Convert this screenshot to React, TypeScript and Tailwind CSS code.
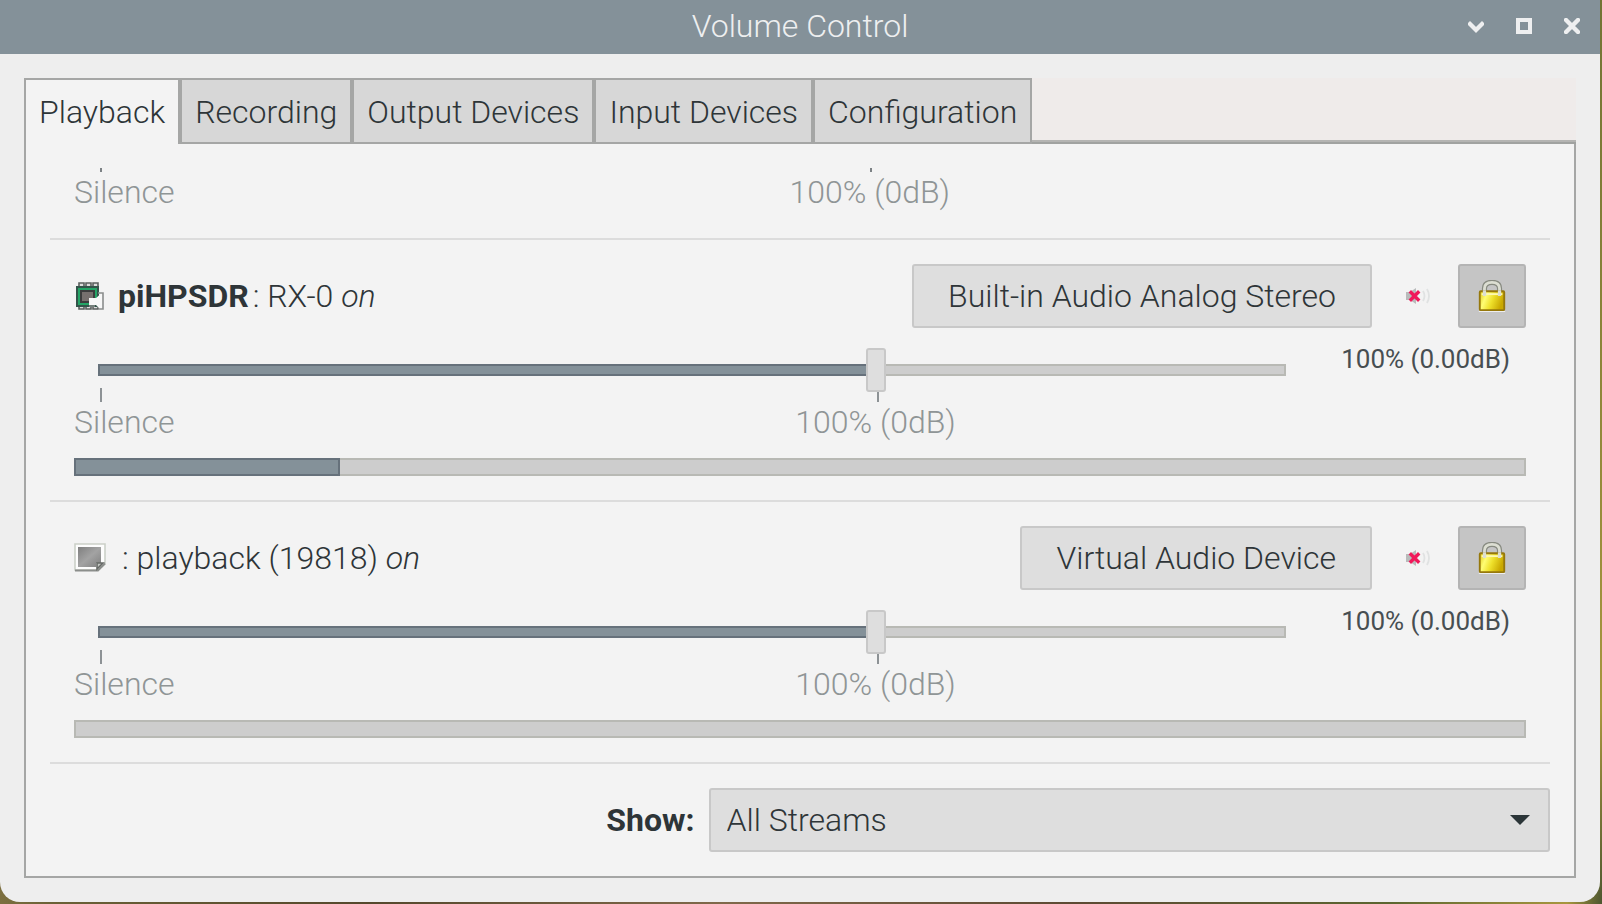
import { useState } from "react";

const TABS = ["Playback", "Recording", "Output Devices", "Input Devices", "Configuration"];

function ChipIcon() {
  return (
    <svg viewBox="0 0 32 32" className="size-8 shrink-0" aria-hidden="true">
      <path
        d="M5 6V3h5v3M12 6V3h5v3M19 6V3h5v3M5 26v3h5v-3M12 26v3h5v-3M19 26v3h5v-3"
        fill="#dcdcdc"
        stroke="#5b5f5e"
        strokeWidth="1.6"
      />
      <rect x="3" y="7" width="21" height="19" fill="#25a566" stroke="#33544a" strokeWidth="2" />
      <rect x="7" y="11" width="13" height="11" fill="#77706e" stroke="#3c3d3d" strokeWidth="2" />
      <path d="M15 18h7l7-6v17h-3l-4-4h-7z" fill="#f7f7f7" />
      <path d="M24 13h5v16h-4M15 26h6" fill="none" stroke="#8a8d8c" strokeWidth="1.6" />
    </svg>
  );
}

function NoteIcon() {
  return (
    <svg viewBox="0 0 32 32" className="size-8 shrink-0" aria-hidden="true">
      <defs>
        <linearGradient id="note" x1="0" y1="0" x2="1" y2="1">
          <stop offset="0" stopColor="#7f7f7f" />
          <stop offset="0.5" stopColor="#a3a3a3" />
          <stop offset="1" stopColor="#808080" />
        </linearGradient>
      </defs>
      <path d="M1 2h30v20l-7 6H1z" fill="#fdfdfd" stroke="#cbd0c8" strokeWidth="1.6" />
      <path d="M1 28.500h23l7-7" fill="none" stroke="#8b8e8b" strokeWidth="1.8" />
      <path d="M4 5h23v16h-5v4H4z" fill="url(#note)" />
      <path d="M23 27v-6h6z" fill="#c4c7c4" stroke="#666966" strokeWidth="1.6" />
    </svg>
  );
}

function MuteIcon() {
  return (
    <svg viewBox="0 0 32 20" className="h-5 w-8" aria-hidden="true">
      <path d="M7 6h4l6-4v16l-6-4H7z" fill="#b9bbbb" />
      <path d="M24 5q3 5 0 10M28 3q4 7 0 14" fill="none" stroke="#e0e2e2" strokeWidth="1.8" />
      <path d="M12 6.500l7 7M19 6.500l-7 7" stroke="#f0195a" strokeWidth="3.4" strokeLinecap="square" />
    </svg>
  );
}

function LockIcon() {
  return (
    <svg viewBox="0 0 32 34" className="h-8 w-8" aria-hidden="true">
      <defs>
        <linearGradient id="brass" x1="0" y1="0" x2="1" y2="0.3">
          <stop offset="0" stopColor="#e0c816" />
          <stop offset="0.3" stopColor="#fffd74" />
          <stop offset="0.6" stopColor="#eee02a" />
          <stop offset="1" stopColor="#c9a800" />
        </linearGradient>
      </defs>
      <path d="M8 16V9q0-6.500 8-6.500T24 9v7" fill="none" stroke="#878a80" strokeWidth="5.5" />
      <path d="M8 16V9q0-6.500 8-6.500T24 9v7" fill="none" stroke="#dcded2" strokeWidth="3" />
      <path d="M2 33.500h28" stroke="#eeeeee" strokeWidth="1.500" />
      <rect x="3" y="12" width="26" height="20" rx="1" fill="url(#brass)" stroke="#96780c" strokeWidth="2" />
      <path d="M5 15h22" stroke="#fdf9b0" strokeWidth="2" />
      <path d="M8 17v-6M24 17v-6" stroke="#dcded2" strokeWidth="3.500" />
    </svg>
  );
}

function ScaleLabels({ inset }: { inset: string }) {
  return (
    <div className="grid leading-10 font-light text-[#8f9596]">
      <span className="col-start-1 row-start-1">Silence</span>
      <span className={`col-start-1 row-start-1 text-center ${inset}`}>100% (0dB)</span>
    </div>
  );
}

function Tick({ short }: { short?: boolean }) {
  return <span className={short ? "h-1 w-0.5 bg-[#7d8285]" : "h-3.5 w-0.5 bg-[#8d9295]"} />;
}

type StreamProps = {
  icon: React.ReactNode;
  app?: string;
  name: string;
  device: string;
  level: number;
};

function Stream({ icon, app, name, device, level }: StreamProps) {
  const [volume, setVolume] = useState(100);
  const [locked, setLocked] = useState(true);
  return (
    <section className="border-b-2 border-[#dcdcdc] p-6">
      <div className="flex items-center">
        {icon}
        <h2 className="ml-3 flex-1 leading-10 font-light">
          <b className="mr-1 font-bold">{app}</b>
          {`: ${name} `}
          <i>on</i>
        </h2>
        <button
          type="button"
          className="h-16 rounded-[3px] border-2 border-[#c8c8c8] bg-[#dedede] px-[34px] font-light"
        >
          {device}
        </button>
        <button type="button" aria-label="Mute audio" className="mx-2 grid h-16 w-[70px] place-items-center">
          <MuteIcon />
        </button>
        <button
          type="button"
          aria-label="Lock channels together"
          aria-pressed={locked}
          onClick={() => setLocked(!locked)}
          className="grid h-16 w-[68px] place-items-center rounded-[3px] border-2 border-[#b4b4b4] bg-[#c5c5c5]"
        >
          <LockIcon />
        </button>
      </div>
      <div className="flex">
        <div className="flex-1 pt-5">
          <div className="px-6">
            <div className="relative z-10 -mb-1 grid items-center">
              <div className="col-start-1 row-start-1 h-3 border-2 border-[#b8b9b4] bg-[#cdcdcd]" />
              <div
                className="col-start-1 row-start-1 h-3 border-2 border-[#66717b] bg-[#849199]"
                style={{ width: `${(volume / 152) * 100}%` }}
              />
              <input
                type="range"
                aria-label={`${name} volume`}
                min={0}
                max={152}
                value={volume}
                onChange={(e) => setVolume(Number(e.target.value))}
                className="col-start-1 row-start-1 h-11 w-full appearance-none bg-transparent [&::-webkit-slider-thumb]:h-11 [&::-webkit-slider-thumb]:w-5 [&::-webkit-slider-thumb]:appearance-none [&::-webkit-slider-thumb]:rounded-[3px] [&::-webkit-slider-thumb]:border-2 [&::-webkit-slider-thumb]:border-solid [&::-webkit-slider-thumb]:border-[#c8c8c8] [&::-webkit-slider-thumb]:bg-[#dedede]"
              />
            </div>
            <div className="flex w-[65.7%] justify-between pl-0.5">
              <Tick />
              <Tick />
            </div>
          </div>
          <ScaleLabels inset="pl-[29.7%]" />
        </div>
        <output className="mt-4 w-54 pr-4 text-right text-[26px] leading-[30px] text-[#474e51]">
          {volume}% (0.00dB)
        </output>
      </div>
      <div className="mt-4 h-[18px] border-2 border-[#b8b9b4] bg-[#cdcdcd]">
        {level > 0 && (
          <div
            className="-mt-0.5 -ml-0.5 h-[18px] border-2 border-[#66717b] bg-[#849199]"
            style={{ width: `${level}%` }}
          />
        )}
      </div>
    </section>
  );
}

export default function App() {
  const [active, setActive] = useState("Playback");
  return (
    <div className="flex min-h-screen flex-col bg-[linear-gradient(100deg,#b09a5c,#6b6136_12%,#55482c_30%,#80694a_50%,#5d4a33_70%,#5c6630_88%,#a8963e_98%,#4c5630)] pr-0.5 pb-0.5 font-[Roboto,sans-serif] text-[32px] text-[#2e3538]">
      <div className="flex flex-1 flex-col rounded-b-[20px] bg-[#eeeeee]">
        <header className="grid h-[54px] grid-cols-[1fr_auto_1fr] items-center bg-[#849199] px-5 pb-0.5 text-[#eeeff0]">
          <h1 className="col-start-2 leading-10 font-light">Volume Control</h1>
          <div className="flex justify-end gap-8">
            <button type="button" aria-label="Minimise">
              <svg viewBox="0 0 16 16" className="size-4" aria-hidden="true">
                <path d="M2 6l6 6 6-6" fill="none" stroke="currentColor" strokeWidth="4.4" strokeLinecap="square" />
              </svg>
            </button>
            <button type="button" aria-label="Maximise">
              <svg viewBox="0 0 16 16" className="size-4" aria-hidden="true">
                <path d="M2 2h12v12H2z" fill="none" stroke="currentColor" strokeWidth="4" />
              </svg>
            </button>
            <button type="button" aria-label="Close">
              <svg viewBox="0 0 16 16" className="size-4" aria-hidden="true">
                <path d="M2 2l12 12M14 2L2 14" stroke="currentColor" strokeWidth="4.4" strokeLinecap="square" />
              </svg>
            </button>
          </div>
        </header>

        <main className="flex flex-1 flex-col p-6">
          <div role="tablist" className="flex h-[66px] bg-[#efebea]">
            {TABS.map((tab) => (
              <button
                key={tab}
                type="button"
                role="tab"
                aria-selected={tab === active}
                onClick={() => setActive(tab)}
                className={
                  tab === active
                    ? "border-x-2 border-t-2 border-[#a5a6a5] bg-[#f3f3f3] px-[13px] font-light"
                    : "border-2 border-[#a5a6a5] bg-[#d7d7d7] px-[13px] pt-0.5 font-light"
                }
              >
                {tab}
              </button>
            ))}
            <div className="flex flex-1 flex-col border-b-2 border-[#a0a2a0]">
              <div className="flex-1 border-b-2 border-[#b4b4b2]" />
            </div>
          </div>

          <div role="tabpanel" className="flex flex-1 flex-col border-x-2 border-b-2 border-[#a5a6a5] bg-[#f3f3f3] p-6">
            <section className="border-b-2 border-[#dcdcdc] px-6 pb-[26px]">
              <div className="mr-56">
                <div className="ml-6 flex w-[63%] justify-between pl-0.5">
                  <Tick short />
                  <Tick short />
                </div>
                <ScaleLabels inset="pl-[29.6%]" />
              </div>
            </section>
            <Stream
              icon={<ChipIcon />}
              app="piHPSDR"
              name="RX-0"
              device="Built-in Audio Analog Stereo"
              level={18.4}
            />
            <Stream icon={<NoteIcon />} name="playback (19818)" device="Virtual Audio Device" level={0} />
            <div className="mt-auto flex items-center justify-end gap-3.5 pt-6">
              <label htmlFor="show" className="font-bold">
                Show:
              </label>
              <div className="grid w-[56.1%] items-center">
                <select
                  id="show"
                  className="col-start-1 row-start-1 h-16 w-full appearance-none rounded-[3px] border-2 border-[#c8c8c8] bg-[#dedede] px-4 font-light"
                >
                  <option>All Streams</option>
                </select>
                <svg
                  viewBox="0 0 20 10"
                  className="pointer-events-none col-start-1 row-start-1 mr-5 h-2.5 w-5 justify-self-end"
                  aria-hidden="true"
                >
                  <path d="M0 0h20L10 10z" fill="#2b3538" />
                </svg>
              </div>
            </div>
          </div>
        </main>
      </div>
    </div>
  );
}
